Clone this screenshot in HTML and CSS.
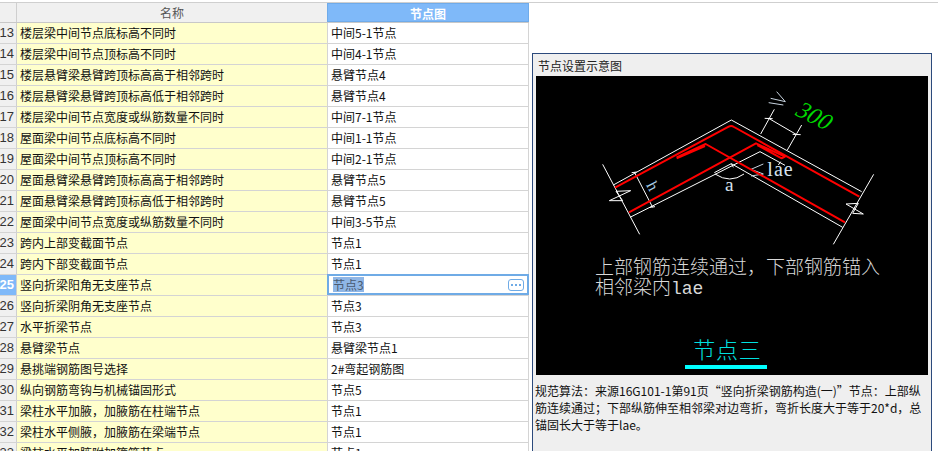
FILE: index.html
```html
<!DOCTYPE html>
<html lang="zh">
<head>
<meta charset="utf-8">
<title>节点设置</title>
<link rel="stylesheet" href="styles.css">
</head>
<body>
<div class="page">
  <div class="grid">
    <div class="row head">
      <div class="num"></div>
      <div class="name">名称</div>
      <div class="val">节点图</div>
    </div>
    <div class="row"><div class="num">13</div><div class="name">楼层梁中间节点底标高不同时</div><div class="val">中间5-1节点</div></div>
    <div class="row"><div class="num">14</div><div class="name">楼层梁中间节点顶标高不同时</div><div class="val">中间4-1节点</div></div>
    <div class="row"><div class="num">15</div><div class="name">楼层悬臂梁悬臂跨顶标高高于相邻跨时</div><div class="val">悬臂节点4</div></div>
    <div class="row"><div class="num">16</div><div class="name">楼层悬臂梁悬臂跨顶标高低于相邻跨时</div><div class="val">悬臂节点4</div></div>
    <div class="row"><div class="num">17</div><div class="name">楼层梁中间节点宽度或纵筋数量不同时</div><div class="val">中间7-1节点</div></div>
    <div class="row"><div class="num">18</div><div class="name">屋面梁中间节点底标高不同时</div><div class="val">中间1-1节点</div></div>
    <div class="row"><div class="num">19</div><div class="name">屋面梁中间节点顶标高不同时</div><div class="val">中间2-1节点</div></div>
    <div class="row"><div class="num">20</div><div class="name">屋面悬臂梁悬臂跨顶标高高于相邻跨时</div><div class="val">悬臂节点5</div></div>
    <div class="row"><div class="num">21</div><div class="name">屋面悬臂梁悬臂跨顶标高低于相邻跨时</div><div class="val">悬臂节点5</div></div>
    <div class="row"><div class="num">22</div><div class="name">屋面梁中间节点宽度或纵筋数量不同时</div><div class="val">中间3-5节点</div></div>
    <div class="row"><div class="num">23</div><div class="name">跨内上部变截面节点</div><div class="val">节点1</div></div>
    <div class="row"><div class="num">24</div><div class="name">跨内下部变截面节点</div><div class="val">节点1</div></div>
    <div class="row current">
      <div class="num">25</div>
      <div class="name">竖向折梁阳角无支座节点</div>
      <div class="val editing">
        <span class="selected">节点3</span>
        <span class="more"><i></i><i></i><i></i></span>
      </div>
    </div>
    <div class="row"><div class="num">26</div><div class="name">竖向折梁阴角无支座节点</div><div class="val">节点3</div></div>
    <div class="row"><div class="num">27</div><div class="name">水平折梁节点</div><div class="val">节点3</div></div>
    <div class="row"><div class="num">28</div><div class="name">悬臂梁节点</div><div class="val">悬臂梁节点1</div></div>
    <div class="row"><div class="num">29</div><div class="name">悬挑端钢筋图号选择</div><div class="val">2#弯起钢筋图</div></div>
    <div class="row"><div class="num">30</div><div class="name">纵向钢筋弯钩与机械锚固形式</div><div class="val">节点5</div></div>
    <div class="row"><div class="num">31</div><div class="name">梁柱水平加腋，加腋筋在柱端节点</div><div class="val">节点1</div></div>
    <div class="row"><div class="num">32</div><div class="name">梁柱水平侧腋，加腋筋在梁端节点</div><div class="val">节点1</div></div>
    <div class="row"><div class="num">33</div><div class="name">梁柱水平加腋附加箍筋节点</div><div class="val">节点1</div></div>
  </div>

  <section class="panel">
    <h2 class="panel-title">节点设置示意图</h2>
    <svg class="diagram" width="392" height="299" viewBox="18 78 1176 897" xmlns="http://www.w3.org/2000/svg">
      <g class="wire">
        <path d="M250 405L604 210L995 425"/>
        <path d="M300 502L690 305L765 346"/>
        <path d="M553 368L604 341L938 532"/>
        <path d="M218 343L329 553"/>
        <path d="M1031 373L910 583"/>
        <path d="M238 452L302 422L258 424L278 452Z"/>
        <path d="M948 462L1000 492L968 490L985 460Z"/>
        <path d="M313 366L368 472"/>
        <path d="M305 368L320 366M360 472L375 470"/>
        <path d="M733 178L692 252M815 225L772 300"/>
        <path d="M716 205L800 254"/>
        <path d="M704 205L728 206M788 253L812 254"/>
        <path d="M555 372Q600 402 642 372"/>
        <path d="M604 341L610 352"/>
        <path d="M745 345L752 335"/>
      </g>
      <g class="wire-soft">
        <path d="M740 125L766 155L722 145M716 158L760 165"/>
        <path d="M700 342L663 358L700 372M663 378L700 372"/>
      </g>
      <g class="rebar">
        <path d="M255 413L596 230Q604 226 612 231L988 440"/>
        <path d="M297 487L678 280L765 320L755 325L682 285"/>
        <path d="M440 322L527 282L945 517"/>
        <path d="M440 325L525 288"/>
      </g>
      <text class="d-green" transform="translate(790 192) rotate(27) skewX(-14)">300</text>
      <text class="d-white d-lae" x="712" y="377">lae</text>
      <text class="d-white d-a" x="585" y="422">a</text>
      <text class="d-white d-h" transform="translate(348 405) rotate(62)">h</text>
      <text class="d-cn" x="195" y="672">上部钢筋连续通过，下部钢筋锚入</text>
      <text class="d-cn" x="195" y="732">相邻梁内<tspan class="d-mono">lae</tspan></text>
      <text class="d-title" x="490" y="924">节点三</text>
      <rect class="d-bar" x="465" y="945" width="246" height="12"/>
    </svg>
    <p class="note">规范算法：来源16G101-1第91页“竖向折梁钢筋构造(一)”节点：上部纵筋连续通过；下部纵筋伸至相邻梁对边弯折，弯折长度大于等于20*d，总锚固长大于等于lae。</p>
  </section>
</div>
</body>
</html>
```
FILE: styles.css
```css
* { box-sizing: border-box; }
html, body { margin: 0; padding: 0; background: #fff; overflow: hidden; }
body { width: 938px; height: 451px; font: 12px/1 "Noto Sans CJK SC", "Liberation Sans", sans-serif; color: #111; }
.page { display: flex; align-items: flex-start; height: 451px; padding-top: 2px; overflow: hidden; position: relative; }
.page::before { content: ""; position: absolute; left: 0; right: 0; top: 2px; height: 1px; background: #cfcfcf; }
.grid { width: 529px; flex: none; padding-top: 1px; }
.row { display: flex; height: 21px; border-bottom: 1px solid #d4d4d4; }
.num { width: 17px; flex: none; background: #f0f0f0; border-right: 1px solid #cfcfcf; font: 13px/20px "Liberation Sans", sans-serif; color: #333; text-align: right; padding-right: 2px; overflow: hidden; white-space: nowrap; direction: rtl; }
.name { width: 310px; flex: none; background: #ffffcc; padding-left: 3px; line-height: 20px; white-space: nowrap; overflow: hidden; }
.val { width: 202px; flex: none; background: #fff; border-left: 1px solid #d4d4d4; border-right: 1px solid #d4d4d4; padding-left: 3px; line-height: 20px; white-space: nowrap; position: relative; }
.head { height: 20px; border-bottom: 1px solid #c8c8c8; }
.head .num { background: #f0f0f0; }
.head .name { background: #f0f0f0; text-align: center; color: #555; padding: 0; }
.head .val { background: #7fb9f9; color: #fff; font-weight: 700; text-align: center; border: 1px solid #6fabea; padding: 0; line-height: 19px; }
.current .num { background: #7fb9f9; color: #fff; font-weight: 700; }
.val.editing { border: 2px solid #6fabe6; padding-left: 4px; line-height: 17px; display: flex; align-items: center; justify-content: space-between; padding-right: 3px; height: 21px; margin-top: -1px; }
.selected { background: #8fb6e6; color: #4a5a70; line-height: 15px; height: 15px; }
.more { display: flex; align-items: center; justify-content: center; gap: 2px; width: 16px; height: 12px; border: 1px solid #6fabe6; border-radius: 3px; background: #fff; }
.more i { width: 2px; height: 2px; background: #6fabe6; display: block; }
.panel { width: 400px; height: 420px; flex: none; margin: 51px 0 0 3px; background: #efefef; border: 1px solid #2c4a7c; border-bottom: 0; padding: 0 0 0 2px; }
.panel-title { margin: 0; padding: 0 0 0 3px; height: 22px; font-size: 12px; font-weight: 400; line-height: 24px; color: #222; }
.diagram { display: block; background: #000; margin-left: 1px; }
.note { margin: 7px 0 0; width: 396px; font-size: 12px; line-height: 17px; color: #111; }
.wire path { fill: none; stroke: #fff; stroke-width: 3; }
.wire-soft path { fill: none; stroke: #c8d4e0; stroke-width: 3; }
.rebar path { fill: none; stroke: #f00; stroke-width: 6; stroke-linejoin: round; }
.d-green { fill: #00d800; font: 400 72px "Liberation Serif", serif; }
.d-white { fill: #d6e2ee; font-family: "Liberation Serif", serif; }
.d-lae { font-size: 60px; letter-spacing: 3px; }
.d-a { font-size: 58px; }
.d-h { font-size: 48px; fill: #a9cde8; }
.d-cn { fill: #d8d8d8; font: 300 57px "Noto Sans CJK SC", sans-serif; }
.d-mono { font-family: "Liberation Mono", monospace; font-size: 54px; }
.d-title { fill: #00e0e0; font: 300 66px "Noto Sans CJK SC", sans-serif; letter-spacing: 2px; }
.d-bar { fill: #00ffff; }
```
